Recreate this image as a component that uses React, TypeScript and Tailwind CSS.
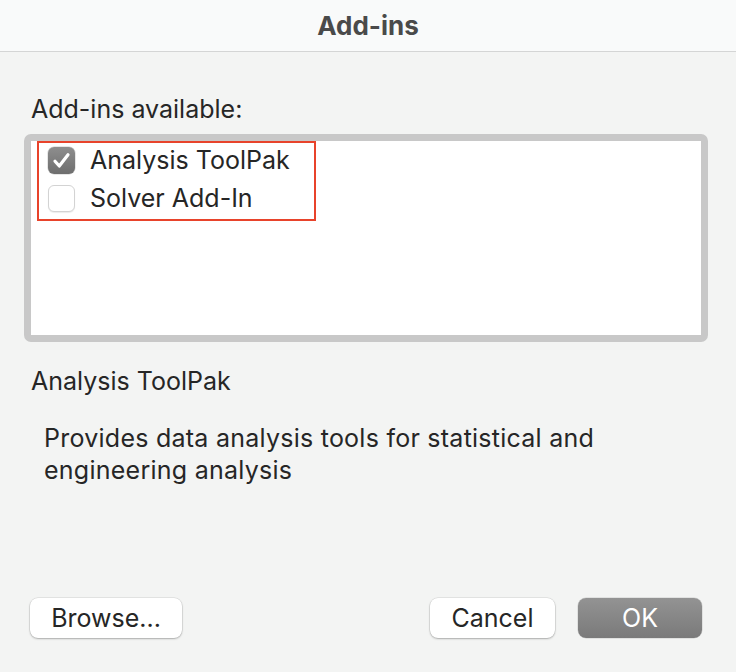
const items = [
  { name: "Analysis ToolPak", checked: true },
  { name: "Solver Add-In", checked: false },
];

function CheckBox({ checked }: { checked: boolean }) {
  if (checked) {
    return (
      <span className="w-[27px] h-[27px] shrink-0 rounded-[6px] bg-gradient-to-b from-[#8e8e8e] to-[#6e6e6e] flex items-center justify-center shadow-[0_0_0_0.5px_rgba(0,0,0,0.2)]">
        <svg width="27" height="27" viewBox="0 0 27 27" fill="none">
          <path d="M7 14.2l4.3 4.8L20 7.8" stroke="#fff" strokeWidth={3.2} strokeLinecap="round" strokeLinejoin="round" />
        </svg>
      </span>
    );
  }
  return (
    <span className="w-[27px] h-[27px] shrink-0 rounded-[6px] bg-white border border-[#d3d3d3] shadow-[0_1px_1px_rgba(0,0,0,0.08)]" />
  );
}

function Button({ label, primary, width }: { label: string; primary?: boolean; width: string }) {
  return (
    <button
      className={`${width} h-[40px] rounded-[8px] text-[25px] leading-[40px] ${
        primary
          ? "bg-gradient-to-b from-[#939393] to-[#7a7a7a] text-white shadow-[0_0_0_0.5px_rgba(0,0,0,0.15)]"
          : "bg-white text-[#262626] shadow-[0_0_0_0.5px_rgba(0,0,0,0.12),0_1px_2px_rgba(0,0,0,0.25)]"
      }`}
    >
      {label}
    </button>
  );
}

export default function App() {
  return (
    <div className="w-full h-screen flex flex-col bg-[#f3f4f3] text-[#262626] font-['Inter','Liberation_Sans',sans-serif]">
      {/* Title bar */}
      <div className="h-[52px] shrink-0 bg-[#f9fafa] border-b border-[#d4d5d5] flex items-center justify-center">
        <span className="text-[26px] font-bold text-[#4a4a4a] leading-[32px] mt-[1px]">Add-ins</span>
      </div>

      <div className="flex-1 flex flex-col pl-[24px] pr-[28px] pt-[41px] pb-[34px]">
        <div className="pl-[7px] text-[25px] leading-[32px]">Add-ins available:</div>

        {/* List */}
        <div className="mt-[9px] h-[208px] border-[7px] border-[#c8c8c8] rounded-[7px] bg-white">
          <div className="ml-[6px] w-[279px] border-2 border-[#e8432b] pt-[4px] pb-[7px] pl-[9px] flex flex-col gap-[11px]">
            {items.map((it) => (
              <div key={it.name} className="flex items-center h-[27px]">
                <CheckBox checked={it.checked} />
                <span className="ml-[15px] text-[25px] leading-[27px] whitespace-nowrap">{it.name}</span>
              </div>
            ))}
          </div>
        </div>

        <div className="mt-[23px] pl-[7px] text-[25px] leading-[32px]">Analysis ToolPak</div>
        <p className="mt-[25px] pl-[20px] pr-[90px] text-[25px] leading-[32px] tracking-[0.01em]">
          Provides data analysis tools for statistical and engineering analysis
        </p>

        {/* Buttons */}
        <div className="mt-auto flex items-center pl-[6px] pr-[6px]">
          <Button label="Browse..." width="w-[152px]" />
          <div className="flex-1" />
          <Button label="Cancel" width="w-[125px]" />
          <div className="w-[23px]" />
          <Button label="OK" primary width="w-[124px]" />
        </div>
      </div>
    </div>
  );
}
